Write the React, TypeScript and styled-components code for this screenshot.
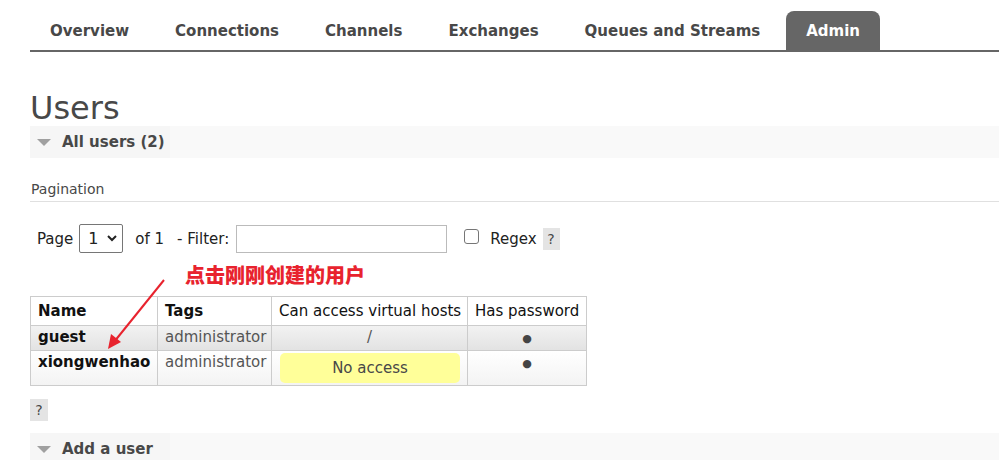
import styled, { createGlobalStyle } from "styled-components";

const GlobalStyle = createGlobalStyle`
  body {
    margin: 0;
    background: #fff;
    font-family: "DejaVu Sans", Verdana, sans-serif;
    color: #484848;
  }
`

const Page = styled.div`
  width: 999px;
  height: 460px;
  overflow: hidden;
  padding-left: 30px;
  box-sizing: border-box;
  position: relative;
`
const Menu = styled.ul`
  list-style: none;
  margin: 0;
  padding: 11px 0 0 0;
  display: flex;
  gap: 6px;
  border-bottom: 2px solid #666;
  height: 39px;
`
const Tab = styled.li<{ $active?: boolean }>`
  padding: 0 20px;
  height: 39px;
  display: flex;
  align-items: center;
  font-weight: bold;
  font-size: 15px;
  color: ${({ $active }) => ($active ? "#fff" : "#484848")};
  background: ${({ $active }) => ($active ? "#666" : "transparent")};
  border-radius: 8px 8px 0 0;
`
const H1 = styled.h1`
  font-size: 32px;
  font-weight: normal;
  margin: 38px 0 0;
  line-height: 36px;
`
const SectionHead = styled.div`
  height: 32px;
  display: flex;
  align-items: center;
  background: linear-gradient(90deg, #f6f6f6 0, #f6f6f6 140px, #f9f9f9 140px);
  font-weight: bold;
  font-size: 15px;
  padding-left: 7px;
  gap: 11px;
`
const Arrow = styled.span`
  width: 0;
  height: 0;
  border-left: 7px solid transparent;
  border-right: 7px solid transparent;
  border-top: 7px solid #a0a0a0;
`
const Pagination = styled.div`
  margin-top: 22px;
  font-size: 14px;
  padding: 0 0 3px 1px;
  border-bottom: 1px solid #e0e0e0;
  line-height: 18px;
`
const FilterRow = styled.div`
  display: flex;
  align-items: center;
  margin-top: 22px;
  padding-left: 7px;
  font-size: 15px;
  color: #222;
`
const Select = styled.div`
  width: 44px;
  height: 29px;
  box-sizing: border-box;
  border: 1px solid #767676;
  border-radius: 2px;
  display: flex;
  align-items: center;
  justify-content: space-between;
  padding: 0 5px 0 8px;
  font-size: 16px;
  margin: 0 12px 0 6px;
`
const FilterLabel = styled.span`
  margin-left: 13px;
`
const TextInput = styled.div`
  width: 211px;
  height: 28px;
  box-sizing: border-box;
  border: 1px solid #bbb;
  margin-left: 7px;
`
const Check = styled.span`
  width: 13px;
  height: 13px;
  border: 1px solid #767676;
  border-radius: 3px;
  margin: 0 11px 0 17px;
  position: relative;
  top: -2px;
`
const Help = styled.span<{ $gap?: number }>`
  display: inline-flex;
  align-items: center;
  justify-content: center;
  width: 17px;
  height: 22px;
  background: #e4e4e4;
  font-size: 14px;
  color: #484848;
  margin-left: ${({ $gap }) => $gap ?? 0}px;
`
const Note = styled.div`
  position: absolute;
  left: 185px;
  top: 260px;
  font-family: "Noto Sans CJK SC", sans-serif;
  font-weight: 900;
  font-size: 20px;
  line-height: 30px;
  color: #e8232e;
`
const NoteArrow = styled.svg`
  position: absolute;
  left: 100px;
  top: 276px;
`
const Table = styled.table`
  border-collapse: collapse;
  table-layout: fixed;
  width: 556px;
  margin-top: 43px;
  font-size: 15px;
`
const Th = styled.th<{ $bold?: boolean; $w: number }>`
  border: 1px solid #ccc;
  height: 29px;
  width: ${({ $w }) => $w}px;
  box-sizing: border-box;
  padding: 0 7px;
  text-align: left;
  font-weight: ${({ $bold }) => ($bold ? "bold" : "normal")};
  font-size: 15px;
  color: #111;
  white-space: nowrap;
`
const Row = styled.tr<{ $alt?: boolean }>`
  background: ${({ $alt }) =>
    $alt
      ? "linear-gradient(#f2f2f2, #e2e2e2)"
      : "linear-gradient(#ffffff, #f3f3f3)"};
`
const Td = styled.td<{ $center?: boolean }>`
  border: 1px solid #ccc;
  padding: 1px 7px;
  vertical-align: top;
  text-align: ${({ $center }) => ($center ? "center" : "left")};
  color: #555;
  font-size: 15px;
  line-height: 21px;
  white-space: nowrap;
`
const NameCell = styled(Td)`
  font-weight: bold;
  color: #111;
`
const Dot = styled.span`
  font-size: 11px;
  color: #444;
`
const NoAccess = styled.div`
  background: #ffff99;
  border-radius: 5px;
  height: 30px;
  margin: 1px 0 1px 1px;
  display: flex;
  align-items: center;
  justify-content: center;
  font-size: 15px;
  color: #484848;
`
const BottomHelp = styled(Help)`
  margin-top: 13px;
  width: 18px;
`
const BottomHead = styled(SectionHead)`
  margin-top: 12px;
`

export default function App() {
  return (
    <Page>
      <GlobalStyle />
      <Menu>
        <Tab>Overview</Tab>
        <Tab>Connections</Tab>
        <Tab>Channels</Tab>
        <Tab>Exchanges</Tab>
        <Tab>Queues and Streams</Tab>
        <Tab $active>Admin</Tab>
      </Menu>

      <H1>Users</H1>
      <SectionHead><Arrow />All users (2)</SectionHead>

      <Pagination>Pagination</Pagination>
      <FilterRow>
        Page
        <Select>1
          <svg width="10" height="7" viewBox="0 0 10 7"><path d="M1 1l4 4 4-4" stroke="#222" strokeWidth="2" fill="none" /></svg>
        </Select>
        of 1
        <FilterLabel>- Filter:</FilterLabel>
        <TextInput />
        <Check />
        Regex
        <Help $gap={6}>?</Help>
      </FilterRow>

      <Table>
        <thead>
          <tr>
            <Th $bold $w={127}>Name</Th>
            <Th $bold $w={114}>Tags</Th>
            <Th $w={196}>Can access virtual hosts</Th>
            <Th $w={119}>Has password</Th>
          </tr>
        </thead>
        <tbody>
          <Row $alt>
            <NameCell>guest</NameCell>
            <Td>administrator</Td>
            <Td $center>/</Td>
            <Td $center><Dot>●</Dot></Td>
          </Row>
          <Row>
            <NameCell>xiongwenhao</NameCell>
            <Td>administrator</Td>
            <Td><NoAccess>No access</NoAccess></Td>
            <Td $center><Dot>●</Dot></Td>
          </Row>
        </tbody>
      </Table>

      <BottomHelp>?</BottomHelp>
      <BottomHead><Arrow />Add a user</BottomHead>

      <Note>点击刚刚创建的用户</Note>
      <NoteArrow width="70" height="76" viewBox="0 0 70 76">
        <line x1="64" y1="4" x2="14" y2="66" stroke="#e8232e" strokeWidth="2" />
        <path d="M8 73 L11 58 L21 66 Z" fill="#e8232e" />
      </NoteArrow>
    </Page>
  )
}
